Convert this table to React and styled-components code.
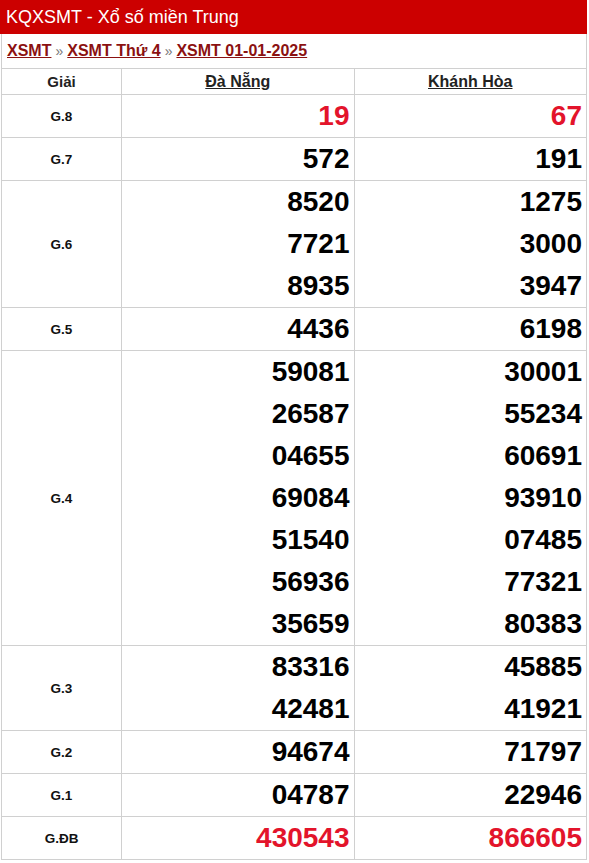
import React from "react"
import styled, { createGlobalStyle } from "styled-components"

const GlobalStyle = createGlobalStyle`
  html, body {
    margin: 0;
    padding: 0;
    background: #ffffff;
    font-family: "Liberation Sans", Arial, sans-serif;
  }
`

const provinces = ["Đà Nẵng", "Khánh Hòa"]

const prizes = [
  { label: "G.8", red: true, values: [["19"], ["67"]] },
  { label: "G.7", values: [["572"], ["191"]] },
  { label: "G.6", values: [["8520", "7721", "8935"], ["1275", "3000", "3947"]] },
  { label: "G.5", values: [["4436"], ["6198"]] },
  {
    label: "G.4",
    values: [
      ["59081", "26587", "04655", "69084", "51540", "56936", "35659"],
      ["30001", "55234", "60691", "93910", "07485", "77321", "80383"],
    ],
  },
  { label: "G.3", values: [["83316", "42481"], ["45885", "41921"]] },
  { label: "G.2", values: [["94674"], ["71797"]] },
  { label: "G.1", values: [["04787"], ["22946"]] },
  { label: "G.ĐB", red: true, values: [["430543"], ["866605"]] },
]

function App() {
  return (
    <>
      <GlobalStyle />
      <Box>
        <TitleBar>KQXSMT - Xổ số miền Trung</TitleBar>
        <Crumbs>
          <CrumbLink>XSMT</CrumbLink>
          <Sep>»</Sep>
          <CrumbLink>XSMT Thứ 4</CrumbLink>
          <Sep>»</Sep>
          <CrumbLink>XSMT 01-01-2025</CrumbLink>
        </Crumbs>
        <Results>
          <colgroup>
            <col style={{ width: 120 }} />
            <col />
            <col />
          </colgroup>
          <thead>
            <tr>
              <HeadCell>Giải</HeadCell>
              {provinces.map(p => (
                <HeadCell key={p}>
                  <Province>{p}</Province>
                </HeadCell>
              ))}
            </tr>
          </thead>
          <tbody>
            {prizes.map(row => (
              <tr key={row.label}>
                <Label>{row.label}</Label>
                {row.values.map((list, i) => (
                  <NumCell key={i}>
                    {list.map((n, j) => (
                      <Num key={j} red={row.red}>
                        {n}
                      </Num>
                    ))}
                  </NumCell>
                ))}
              </tr>
            ))}
          </tbody>
        </Results>
      </Box>
    </>
  )
}

const Box = styled.div`
  width: 586px;
  margin-left: 1px;
  box-sizing: border-box;
`

const TitleBar = styled.div`
  height: 34px;
  background: #cc0000;
  color: #ffffff;
  font-size: 18px;
  line-height: 34px;
  padding-left: 6px;
  margin-left: -1px;
`

const Crumbs = styled.div`
  height: 34px;
  box-sizing: border-box;
  border-left: 1px solid #cfcfcf;
  border-right: 1px solid #cfcfcf;
  padding-left: 5px;
  display: flex;
  align-items: center;
  gap: 4px;
  font-size: 16px;
  font-weight: bold;
`

const CrumbLink = styled.a`
  color: #8b1111;
  text-decoration: underline;
  cursor: pointer;
`

const Sep = styled.span`
  color: #777777;
  font-weight: normal;
  font-size: 14px;
`

const Results = styled.table`
  width: 100%;
  border-collapse: collapse;
  table-layout: fixed;
`

const HeadCell = styled.th`
  height: 25px;
  padding: 0;
  border: 1px solid #d0d0d0;
  font-size: 15px;
  font-weight: bold;
  color: #222222;
  text-align: center;
  vertical-align: middle;
`

const Province = styled.span`
  font-size: 16px;
  text-decoration: underline;
  color: #222222;
`

const Label = styled.td`
  padding: 0;
  border: 1px solid #d0d0d0;
  font-size: 13.5px;
  font-weight: bold;
  color: #111111;
  text-align: center;
  vertical-align: middle;
`

const NumCell = styled.td`
  padding: 0 4px 0 0;
  border: 1px solid #d0d0d0;
  text-align: right;
  vertical-align: middle;
`

const Num = styled.div`
  height: 42px;
  line-height: 42px;
  font-size: 28px;
  font-weight: bold;
  color: ${props => (props.red ? "#e3142b" : "#000000")};
`

export default App
